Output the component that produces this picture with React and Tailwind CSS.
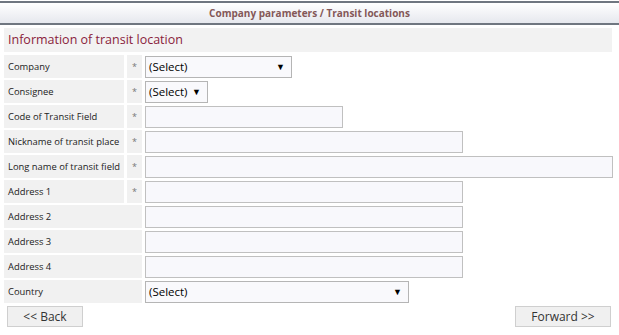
import React from 'react';

const rows = [
  { label: 'Company', req: true, kind: 'select', w: 'w-[147px]' },
  { label: 'Consignee', req: true, kind: 'select', w: 'w-[63px]' },
  { label: 'Code of Transit Field', req: true, kind: 'input', w: 'w-[198px]' },
  { label: 'Nickname of transit place', req: true, kind: 'input', w: 'w-[318px]' },
  { label: 'Long name of transit field', req: true, kind: 'input', w: 'w-[468px]' },
  { label: 'Address 1', req: true, kind: 'input', w: 'w-[318px]' },
  { label: 'Address 2', req: false, kind: 'input', w: 'w-[318px]' },
  { label: 'Address 3', req: false, kind: 'input', w: 'w-[318px]' },
  { label: 'Address 4', req: false, kind: 'input', w: 'w-[318px]' },
  { label: 'Country', req: false, kind: 'select', w: 'w-[264px]' },
];

const Field = ({ kind, w }) => {
  if (kind === 'select') {
    return (
      <div className={`${w} h-[22px] border border-[#b5b5b5] bg-[#f9f9fc] flex items-center justify-between pl-[3px] pr-[6px] text-[11.5px] text-black`}>
        <span>(Select)</span>
        <span className="text-[9px]">▼</span>
      </div>
    );
  }
  return <div className={`${w} h-[22px] border border-[#c0c0c0] bg-[#f8f8fc]`} />;
};

const App = () => {
  return (
    <div className="w-[619px] h-[335px] bg-white font-['Open_Sans','Noto_Sans',sans-serif] overflow-hidden">
      <div className="mt-[1px] h-[24px] border-t-2 border-b-2 border-[#6f7680] bg-gradient-to-b from-white to-[#e6e8ee] flex items-center justify-center">
        <span className="text-[10px] font-bold text-[#845858]">Company parameters / Transit locations</span>
      </div>
      <div className="px-[4px] pt-[3px]">
        <div className="w-[608px] h-[24px] bg-[#f2f2f2] flex items-center pl-[4px]">
          <span className="text-[12.5px] text-[#8a1d3c]">Information of transit location</span>
        </div>
        <div className="mt-[3px] flex flex-col gap-[2px]">
          {rows.map((r) => (
            <div key={r.label} className="flex items-center h-[23px]">
              {r.req ? (
                <>
                  <div className="w-[120px] h-full bg-[#f1f1f1] flex items-center pl-[4px] pt-[1px] text-[9.4px] text-[#222]">{r.label}</div>
                  <div className="ml-[3px] w-[15px] h-full bg-[#f1f1f1] flex items-center justify-center text-[9px] text-[#777]">*</div>
                </>
              ) : (
                <div className="w-[138px] h-full bg-[#f1f1f1] flex items-center pl-[4px] pt-[1px] text-[9.4px] text-[#222]">{r.label}</div>
              )}
              <div className="ml-[3px]">
                <Field kind={r.kind} w={r.w} />
              </div>
            </div>
          ))}
        </div>
        <div className="mt-[3px] flex justify-between pl-[3px] pr-[4px]">
          <button className="w-[76px] h-[21px] bg-[#f0f0f0] border border-[#cfcfcf] text-[12px] text-[#333]">&lt;&lt; Back</button>
          <button className="w-[96px] h-[21px] bg-[#f0f0f0] border border-[#cfcfcf] text-[12px] text-[#333]">Forward &gt;&gt;</button>
        </div>
      </div>
    </div>
  );
};

export default App;
